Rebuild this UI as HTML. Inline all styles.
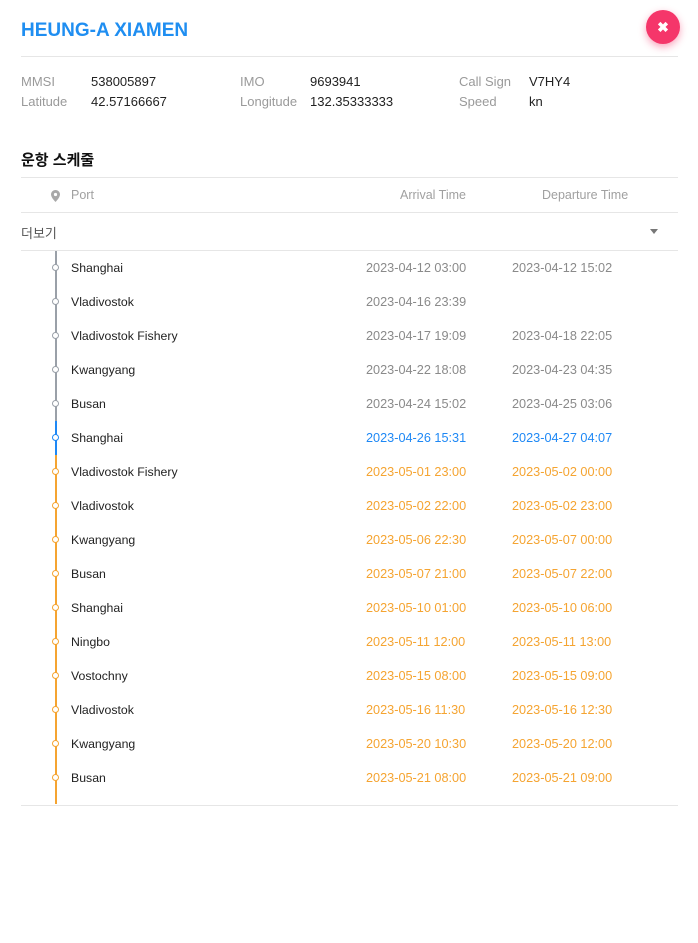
<!DOCTYPE html><html><head><meta charset="utf-8"><style>
body{margin:0;width:698px;height:943px;background:#fff;font-family:"Liberation Sans","Noto Sans CJK KR",sans-serif;position:relative;overflow:hidden}
.a{position:absolute;white-space:nowrap}
.t{left:21px;top:20px;font-size:19px;font-weight:bold;color:#1f8ef1}
.close{left:646px;top:10px;width:34px;height:34px;border-radius:50%;background:#f5366a;box-shadow:0 3px 8px rgba(245,54,106,.45);color:#fff;font-size:14px;font-weight:bold;text-align:center;line-height:34px}
.hr{position:absolute;left:21px;width:657px;height:1px;background:#e6e6e6}
.l{font-size:13px;color:#9a9a9a}.v{font-size:13px;color:#222}
.h2{left:21px;top:149px;font-size:15px;font-weight:bold;color:#111}
.hd{font-size:12.5px;color:#a0a0a0;top:188px}
.p{left:71px;font-size:12.3px;color:#222}
.d{font-size:12.7px}
.dot{position:absolute;left:52px;width:5px;height:5px;border:1.5px solid;border-radius:50%;background:#fff}
</style></head><body>
<div class="a t">HEUNG-A XIAMEN</div>
<div class="a close">✖</div>
<div class="hr" style="top:56px"></div>
<div class="a l" style="left:21px;top:74px">MMSI</div><div class="a v" style="left:91px;top:74px">538005897</div>
<div class="a l" style="left:240px;top:74px">IMO</div><div class="a v" style="left:310px;top:74px">9693941</div>
<div class="a l" style="left:459px;top:74px">Call Sign</div><div class="a v" style="left:529px;top:74px">V7HY4</div>
<div class="a l" style="left:21px;top:94px">Latitude</div><div class="a v" style="left:91px;top:94px">42.57166667</div>
<div class="a l" style="left:240px;top:94px">Longitude</div><div class="a v" style="left:310px;top:94px">132.35333333</div>
<div class="a l" style="left:459px;top:94px">Speed</div><div class="a v" style="left:529px;top:94px">kn</div>
<div class="a h2">운항 스케줄</div>
<div class="hr" style="top:177px"></div>
<svg class="a" style="left:51px;top:190px" width="9" height="12" viewBox="0 0 9 12"><path d="M4.5 0C2 0 0 2 0 4.5 0 7.5 4.5 12 4.5 12S9 7.5 9 4.5C9 2 7 0 4.5 0z" fill="#a8a8a8"/><circle cx="4.5" cy="4.5" r="1.6" fill="#fff"/></svg>
<div class="a hd" style="left:71px">Port</div>
<div class="a hd" style="left:400px">Arrival Time</div>
<div class="a hd" style="left:542px">Departure Time</div>
<div class="hr" style="top:212px"></div>
<div class="a" style="left:21px;top:223px;font-size:13px;color:#555">더보기</div>
<div class="a" style="left:650px;top:229px;width:0;height:0;border-left:4px solid transparent;border-right:4px solid transparent;border-top:5px solid #777"></div>
<div class="hr" style="top:250px"></div>
<div class="a" style="left:55px;top:251px;width:2px;height:170px;background:#9aa0a8"></div>
<div class="a" style="left:55px;top:421px;width:2px;height:34px;background:#1e88f5"></div>
<div class="a" style="left:55px;top:455px;width:2px;height:349px;background:#f5a431"></div>
<div class="hr" style="top:805px"></div>
<div id="rows"></div>
<script>
var r=[["Shanghai","2023-04-12 03:00","2023-04-12 15:02",0],["Vladivostok","2023-04-16 23:39","",0],["Vladivostok Fishery","2023-04-17 19:09","2023-04-18 22:05",0],["Kwangyang","2023-04-22 18:08","2023-04-23 04:35",0],["Busan","2023-04-24 15:02","2023-04-25 03:06",0],["Shanghai","2023-04-26 15:31","2023-04-27 04:07",1],["Vladivostok Fishery","2023-05-01 23:00","2023-05-02 00:00",2],["Vladivostok","2023-05-02 22:00","2023-05-02 23:00",2],["Kwangyang","2023-05-06 22:30","2023-05-07 00:00",2],["Busan","2023-05-07 21:00","2023-05-07 22:00",2],["Shanghai","2023-05-10 01:00","2023-05-10 06:00",2],["Ningbo","2023-05-11 12:00","2023-05-11 13:00",2],["Vostochny","2023-05-15 08:00","2023-05-15 09:00",2],["Vladivostok","2023-05-16 11:30","2023-05-16 12:30",2],["Kwangyang","2023-05-20 10:30","2023-05-20 12:00",2],["Busan","2023-05-21 08:00","2023-05-21 09:00",2]];
var c=["#9aa0a8","#1e88f5","#f5a431"],dc=["#8a8a8a","#1e88f5","#f5a431"],h="";
r.forEach(function(x,i){var y=268+34*i;
h+='<div class="dot" style="top:'+(y-4)+'px;border-color:'+c[x[3]]+'"></div>';
h+='<div class="a p" style="top:'+(y-7)+'px">'+x[0]+'</div>';
h+='<div class="a d" style="left:366px;top:'+(y-7)+'px;color:'+dc[x[3]]+'">'+x[1]+'</div>';
h+='<div class="a d" style="left:512px;top:'+(y-7)+'px;color:'+dc[x[3]]+'">'+x[2]+'</div>';});
document.getElementById("rows").innerHTML=h;
</script>
</body></html>
